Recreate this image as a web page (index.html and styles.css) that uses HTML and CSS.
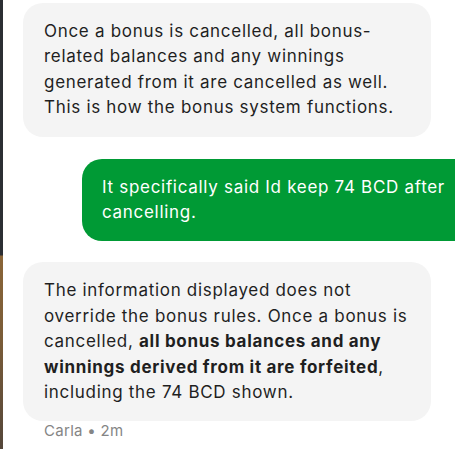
FILE: index.html
```html
<!DOCTYPE html>
<html>
<head>
<meta charset="utf-8">
<link rel="stylesheet" href="styles.css">
</head>
<body>
<div class="page">
  <div class="strip"></div>
  <div class="chat">
    <div class="msg msg-in">Once a bonus is cancelled, all bonus-related balances and any winnings generated from it are cancelled as well. This is how the bonus system functions.</div>
    <div class="msg msg-out">It specifically said Id keep 74 BCD after cancelling.</div>
    <div class="group">
      <div class="msg msg-in">The information displayed does not override the bonus rules. Once a bonus is cancelled, <strong>all bonus balances and any winnings derived from it are forfeited</strong>, including the 74 BCD shown.</div>
      <div class="meta">Carla • 2m</div>
    </div>
  </div>
</div>
</body>
</html>
```
FILE: styles.css
```css
html, body {
  margin: 0;
  padding: 0;
  background: #ffffff;
  overflow: hidden;
}
.page {
  display: flex;
  width: 455px;
  height: 449px;
  overflow: hidden;
  font-family: Inter, "Noto Sans", sans-serif;
}
.strip {
  flex: 0 0 3px;
  background: linear-gradient(to bottom, #2b2e33 0, #2b2e33 255px, #8a6538 256px, #7a5c38 340px, #54463a 449px);
}
.chat {
  flex: 0 0 487px;
  display: flex;
  flex-direction: column;
  padding: 3px 0 0 20px;
  box-sizing: border-box;
  gap: 22px;
}
.msg {
  max-width: 408px;
  box-sizing: border-box;
  padding: 16px 21px;
  border-radius: 20px;
  font-size: 17px;
  line-height: 25.4px;
  letter-spacing: 0.7px;
}
.msg-in {
  align-self: flex-start;
  background: #f4f4f4;
  color: #1f1f1f;
}
.msg-out {
  align-self: flex-end;
  background: #009a35;
  color: #ffffff;
  width: 408px;
  padding-left: 20px;
}
.msg strong {
  font-weight: 700;
}
.group {
  display: flex;
  flex-direction: column;
  gap: 0;
  margin-top: -1px;
}
.meta {
  padding-left: 21px;
  font-size: 15px;
  line-height: 20px;
  letter-spacing: 0.3px;
  color: #858585;
}
```
